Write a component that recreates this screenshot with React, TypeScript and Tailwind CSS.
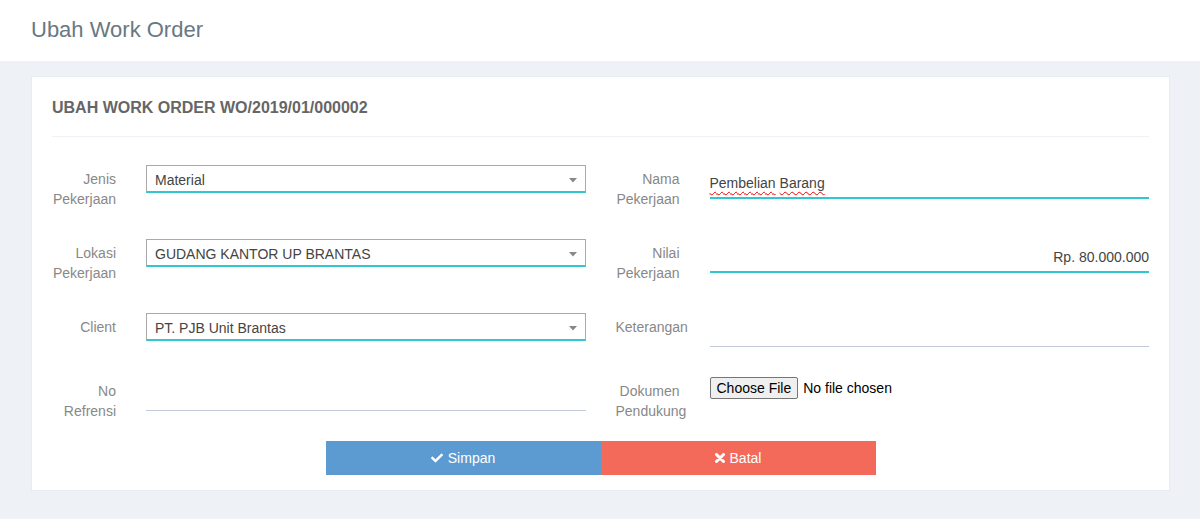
import React from 'react';
import { FaCheck } from 'react-icons/fa';

function Label({ children }: { children: React.ReactNode }) {
  return (
    <div className="w-[64px] shrink-0 pt-[5px] text-right text-[14px] leading-[19.5px] text-[#888]">
      {children}
    </div>
  );
}

function SelectBox({ value }: { value: string }) {
  return (
    <div className="flex h-[28px] flex-1 items-start justify-between border border-b-2 border-[#aaa] border-b-[#32c5d2] pl-2 pr-[8px] pt-1 text-[14px] text-[#444]">
      <span className="leading-5">{value}</span>
      <svg width="8" height="5" viewBox="0 0 8 5" className="mt-[8px]">
        <path d="M0 0 L8 0 L4 4.5 Z" fill="#888" />
      </svg>
    </div>
  );
}

function LineInput({
  children,
  focused,
  right,
}: {
  children?: React.ReactNode;
  focused?: boolean;
  right?: boolean;
}) {
  return (
    <div
      className={
        focused
          ? 'h-[34px] flex-1 border-b-2 border-[#32c5d2] pt-2 text-[14px] leading-5 text-[#444]' + (right ? ' text-right' : '')
          : 'h-[34px] flex-1 border-b border-[#c2cad8] pt-2 text-[14px] leading-5 text-[#444]'
      }
    >
      {children}
    </div>
  );
}

function Field({ label, children }: { label: React.ReactNode; children: React.ReactNode }) {
  return (
    <div className="flex items-start gap-[30px]">
      <Label>{label}</Label>
      {children}
    </div>
  );
}

export default function App() {
  return (
    <div className="min-h-screen bg-[#eef1f5] font-['Liberation_Sans',Arial,sans-serif]">
      <div className="h-[61px] bg-white px-[31px] pt-[17px]">
        <h1 className="text-[22px] leading-[25px] text-[#697882]">Ubah Work Order</h1>
      </div>

      <div className="pl-[31px] pr-[30px] pt-[15px]">
        <div className="border border-[#e7ecf1] bg-white px-5 pb-[15px]">
          <div className="border-b border-[#eef1f5] pt-[21px] pb-[18px]">
            <h2 className="text-[16px] font-bold leading-5 text-[#666]">
              UBAH WORK ORDER WO/2019/01/000002
            </h2>
          </div>

          <form className="pt-[28px]">
            <div className="mb-[30px] grid grid-cols-2 gap-x-[30px]">
              <Field label="Jenis Pekerjaan">
                <SelectBox value="Material" />
              </Field>
              <Field label="Nama Pekerjaan">
                <LineInput focused>
                  <span className="underline decoration-[#e00] decoration-wavy decoration-1 underline-offset-[3px]">Pembelian</span>{' '}
                  <span className="underline decoration-[#e00] decoration-wavy decoration-1 underline-offset-[3px]">Barang</span>
                </LineInput>
              </Field>
            </div>

            <div className="mb-[30px] grid grid-cols-2 gap-x-[30px]">
              <Field label="Lokasi Pekerjaan">
                <SelectBox value="GUDANG KANTOR UP BRANTAS" />
              </Field>
              <Field label="Nilai Pekerjaan">
                <LineInput focused right>
                  Rp. 80.000.000
                </LineInput>
              </Field>
            </div>

            <div className="mb-[30px] grid grid-cols-2 gap-x-[30px]">
              <Field label="Client">
                <SelectBox value="PT. PJB Unit Brantas" />
              </Field>
              <Field label="Keterangan">
                <LineInput />
              </Field>
            </div>

            <div className="mb-5 grid grid-cols-2 gap-x-[30px]">
              <Field label="No Refrensi">
                <LineInput />
              </Field>
              <Field label="Dokumen Pendukung">
                <div className="flex flex-1 items-center text-[14px] leading-5 text-black">
                  <span className="h-[22px] rounded-[2px] border border-[#767676] bg-[#efefef] px-[6px]">
                    Choose File
                  </span>
                  <span className="ml-[5px]">No file chosen</span>
                </div>
              </Field>
            </div>

            <div className="flex justify-center">
              <button
                type="button"
                className="flex h-[34px] w-[275px] items-center justify-center gap-[5px] bg-[#5c9bd1] text-[14px] text-white"
              >
                <FaCheck className="h-[12px] w-[12px]" />
                Simpan
              </button>
              <button
                type="button"
                className="flex h-[34px] w-[275px] items-center justify-center gap-[5px] bg-[#f36a5a] text-[14px] text-white"
              >
                <svg width="10" height="10" viewBox="0 0 10 10">
                  <path d="M1.5 1.5 L8.5 8.5 M8.5 1.5 L1.5 8.5" stroke="white" strokeWidth="3" strokeLinecap="round" />
                </svg>
                Batal
              </button>
            </div>
          </form>
        </div>
      </div>
    </div>
  );
}
